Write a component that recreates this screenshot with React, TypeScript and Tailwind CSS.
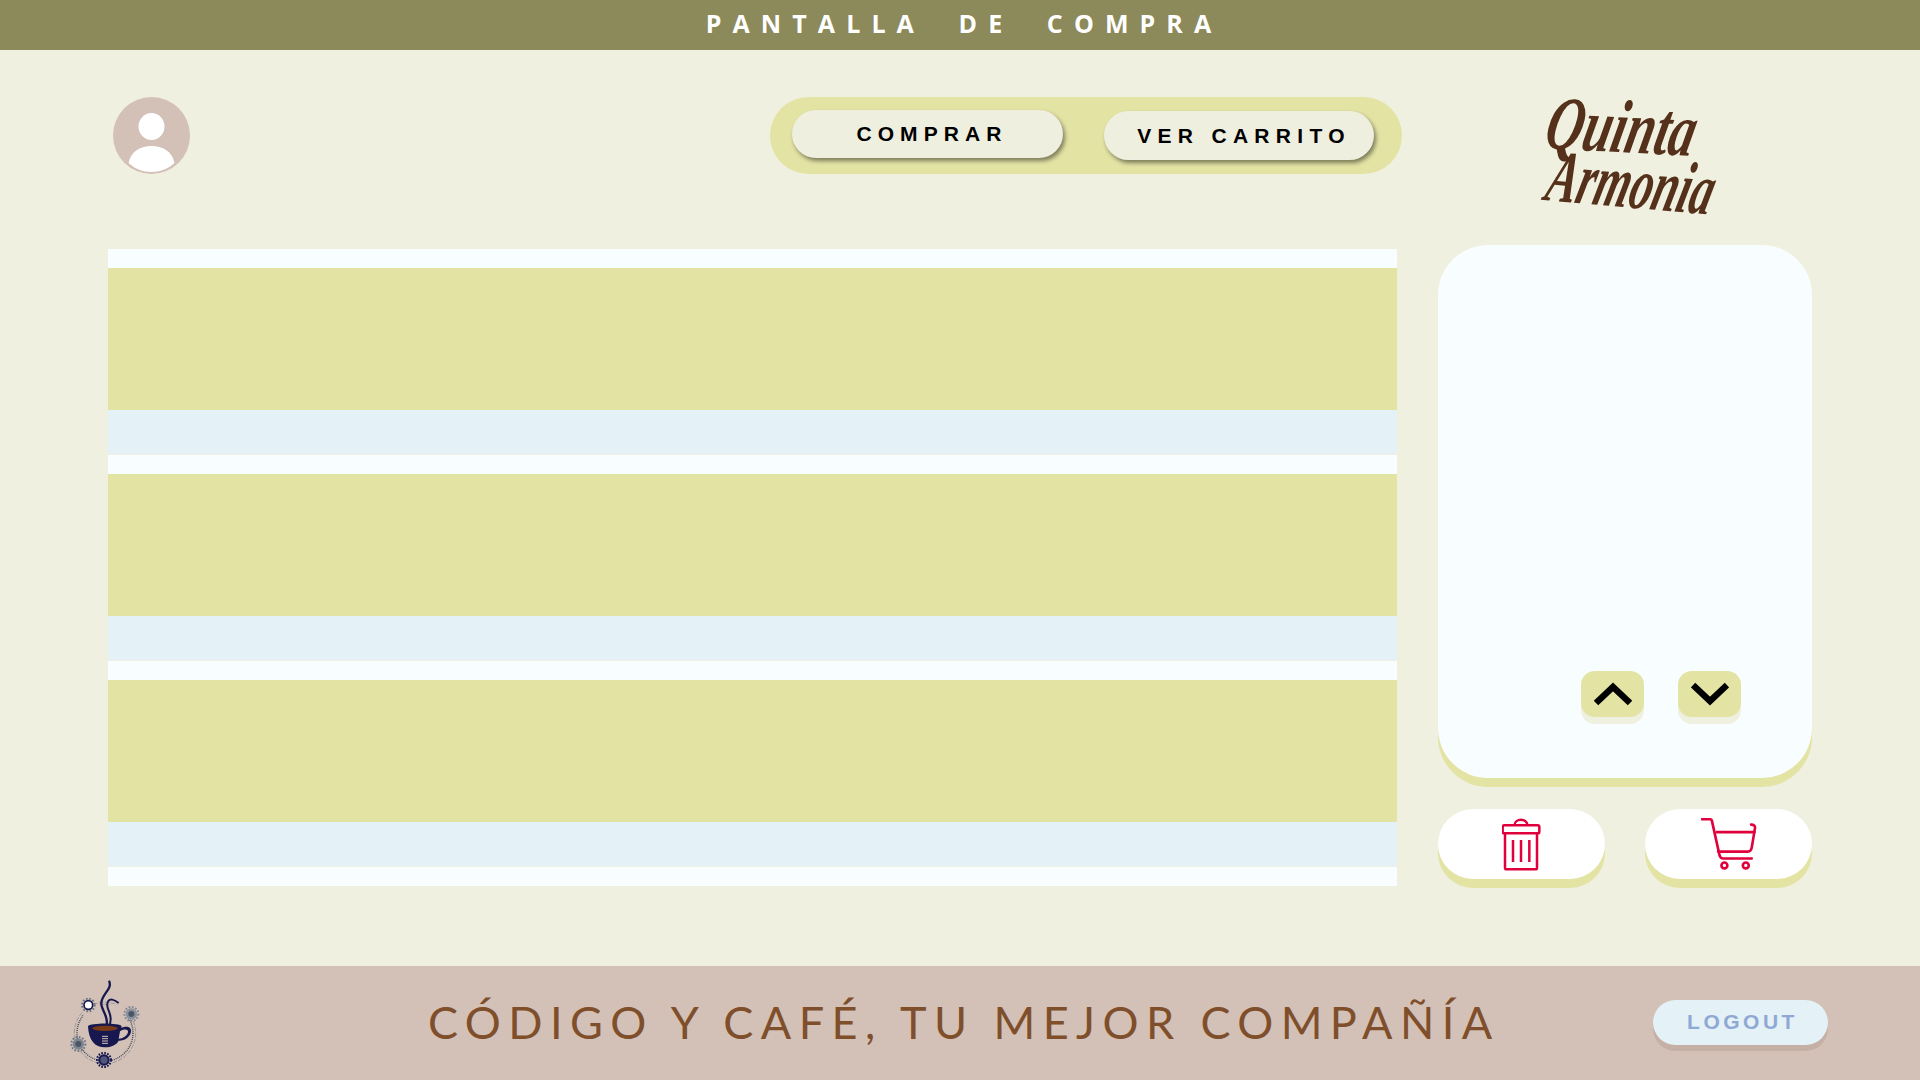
const Avatar = () => (
  <svg width="77" height="77" viewBox="0 0 77 77" className="shrink-0 rounded-full bg-[#d3c1b7]">
    <ellipse cx="38.5" cy="29.5" rx="13" ry="13.5" fill="#fff" />
    <path d="M15.5 66 C18 54 28 49 38.5 49 C49 49 59 54 61.5 66 C55 72 47 75 38.5 75 C30 75 22 72 15.5 66Z" fill="#fff" />
  </svg>
);

const Logo = () => (
  <svg width="180" height="120" viewBox="0 0 180 120" className="overflow-visible font-['Liberation_Serif'] italic font-bold" fill="#55301a">
    <text x="0" y="0" fontSize="76" textLength="149" lengthAdjust="spacingAndGlyphs" transform="translate(2 48) rotate(3) skewX(-10)">
      Quinta
    </text>
    <text x="0" y="0" fontSize="74" textLength="166" lengthAdjust="spacingAndGlyphs" transform="translate(3 100) rotate(5) skewX(-10)">
      Armonia
    </text>
  </svg>
);

const Chevron = ({ down }: { down?: boolean }) => (
  <svg width="38" height="24" viewBox="0 0 38 24" fill="none" stroke="#000" strokeWidth="6.5">
    <polyline points={down ? "2,3 19,19 36,3" : "2,21 19,5 36,21"} />
  </svg>
);

const Trash = () => (
  <svg width="40" height="53" viewBox="3 0 120 159" fill="none" stroke="#e0003c" strokeWidth="7.5" strokeLinejoin="round">
    <path d="M40 22 C42 0 78 0 80 22" />
    <rect x="5" y="22" width="110" height="24" rx="5" />
    <path d="M12 46 V149 Q12 154 17 154 H103 Q108 154 108 149 V46" />
    <path d="M36 66 V132 M60 66 V132 M85 66 V132" />
  </svg>
);

const Cart = () => (
  <svg width="56" height="54" viewBox="0 0 170 162" fill="none" stroke="#e0003c" strokeWidth="8" strokeLinecap="round" strokeLinejoin="round">
    <path d="M3 6 H28 Q32 6 33 10 L56 114 Q58 125 68 125 H154" />
    <path d="M152 22 Q165 22 164 32 L154 92 Q152 104 142 104 H52" />
    <path d="M48 45 H162" />
    <circle cx="71" cy="146" r="9" />
    <circle cx="136" cy="146" r="9" />
  </svg>
);

const CoffeeLogo = () => (
  <svg width="70" height="90" viewBox="90 50 210 270" className="shrink-0" fill="none">
    <circle cx="195" cy="215" r="92" stroke="#7d8590" strokeWidth="2" strokeDasharray="14 4" />
    <circle cx="195" cy="215" r="84" stroke="#3b4256" strokeWidth="4" strokeDasharray="3 3" />
    <rect x="130" y="130" width="130" height="60" fill="#d3c1b7" />
    <path d="M207 58 C220 85 180 100 184 130 C187 150 205 165 200 190" stroke="#17184f" strokeWidth="7" />
    <path d="M236 125 C205 100 195 125 207 150 C215 170 212 190 204 205" stroke="#17184f" strokeWidth="6" />
    <path d="M144 195 C146 238 165 258 194 258 C215 258 230 250 236 238 C262 240 278 215 272 203 C268 194 252 196 244 200 L245 195 C240 184 150 184 144 195Z" fill="#17184f" />
    <path d="M240 210 C250 202 266 202 264 212 C262 224 248 232 236 232Z" fill="#d3c1b7" />
    <ellipse cx="195" cy="201" rx="38" ry="8" fill="#7a3a16" />
    <path d="M186 225 H204 M186 232 H204 M186 239 H204 M186 246 H204" stroke="#d3c1b7" strokeWidth="3" />
    <circle cx="145" cy="131" r="19" stroke="#6b7482" strokeWidth="6" strokeDasharray="5 5" />
    <circle cx="145" cy="131" r="13" fill="#fff" stroke="#17184f" strokeWidth="5" />
    <circle cx="274" cy="158" r="21" stroke="#7d8590" strokeWidth="6" strokeDasharray="5 5" />
    <circle cx="274" cy="158" r="17" fill="#8a92a0" />
    <circle cx="274" cy="158" r="9" fill="#4c5564" />
    <circle cx="115" cy="248" r="21" stroke="#6b7482" strokeWidth="6" strokeDasharray="5 5" />
    <circle cx="115" cy="248" r="17" fill="#7d8590" />
    <circle cx="115" cy="248" r="9" fill="#4c5564" />
    <circle cx="192" cy="296" r="14" fill="#51557e" stroke="#17184f" strokeWidth="6" />
    <circle cx="192" cy="296" r="21" stroke="#17184f" strokeWidth="6" strokeDasharray="5 4" />
  </svg>
);

const Row = () => (
  <div className="flex flex-col">
    <div className="h-[19px] bg-[#f8fdff]" />
    <div className="h-[142px] bg-[#e3e3a4]" />
    <div className="h-[44px] bg-[#e4f1f6]" />
    <div className="h-px bg-[#eff0df]" />
  </div>
);

export default function App() {
  return (
    <div className="flex h-screen flex-col overflow-hidden bg-[#eff0df]">
      <header className="flex h-[50px] shrink-0 items-center justify-center bg-[#8c895a]">
        <h1 className="mb-[2px] pl-[8px] font-['Open_Sans'] text-[25px] font-bold tracking-[11.1px] [word-spacing:16px] text-white">
          PANTALLA DE COMPRA
        </h1>
      </header>

      <main className="flex flex-1 pl-[108px]">
        <section className="w-[1294px] shrink-0 pt-[47px]">
          <div className="flex h-[77px] items-center justify-between pl-[5px]">
            <Avatar />
            <div className="flex h-[77px] items-start rounded-full bg-[#e3e3a4] pl-[22px] pr-[28px]">
              <button className="mt-[13px] h-[48px] w-[271px] rounded-full bg-[#efefe0] pl-[9px] font-['Liberation_Sans'] text-[21px] font-bold tracking-[6.1px] text-black shadow-[2px_3px_4px_rgba(0,0,0,0.45)]">
                COMPRAR
              </button>
              <button className="ml-[41px] mt-[14px] h-[49px] w-[270px] rounded-full bg-[#efefe0] pl-[10px] font-['Liberation_Sans'] text-[21px] font-bold tracking-[6.3px] text-black shadow-[2px_3px_4px_rgba(0,0,0,0.45)]">
                VER CARRITO
              </button>
            </div>
          </div>

          <div className="mt-[75px] w-[1289px]">
            <Row />
            <Row />
            <Row />
            <div className="h-[19px] bg-[#f8fdff]" />
          </div>
        </section>

        <aside className="ml-[36px] flex w-[374px] shrink-0 flex-col pt-[50px]">
          <div className="mb-[25px] ml-[102px] h-[120px]">
            <Logo />
          </div>
          <div className="flex h-[533px] flex-col justify-end rounded-[50px] bg-[#f8fdff] pb-[61px] pl-[143px] shadow-[0_9px_0_#e3e3a4]">
            <div className="flex gap-[34px]">
              <button className="flex h-[46px] w-[63px] items-center justify-center rounded-[14px] bg-[#e3e3a4] shadow-[0_7px_0_#eff0df]">
                <Chevron />
              </button>
              <button className="flex h-[46px] w-[63px] items-center justify-center rounded-[14px] bg-[#e3e3a4] shadow-[0_7px_0_#eff0df]">
                <Chevron down />
              </button>
            </div>
          </div>
          <div className="mt-[31px] flex justify-between">
            <button className="flex h-[70px] w-[167px] items-center justify-center rounded-full bg-white shadow-[0_9px_0_#e3e3a4]">
              <Trash />
            </button>
            <button className="flex h-[70px] w-[167px] items-center justify-center rounded-full bg-white shadow-[0_9px_0_#e3e3a4]">
              <Cart />
            </button>
          </div>
        </aside>
      </main>

      <footer className="flex h-[114px] shrink-0 items-center bg-[#d3c1b7] pl-[70px] pr-[92px]">
        <CoffeeLogo />
        <p className="ml-[288px] font-['Lato'] text-[45px] font-normal tracking-[7.4px] text-[#7f4f2b]">
          CÓDIGO Y CAFÉ, TU MEJOR COMPAÑÍA
        </p>
        <button className="mb-px ml-auto h-[45px] w-[175px] rounded-full bg-[#e4f1f6] pb-[2px] pl-[4px] font-['Liberation_Sans'] text-[21px] font-bold tracking-[3.5px] text-[#8fa9d4] shadow-[0_6px_0_#c4b0a5]">
          LOGOUT
        </button>
      </footer>
    </div>
  );
}
